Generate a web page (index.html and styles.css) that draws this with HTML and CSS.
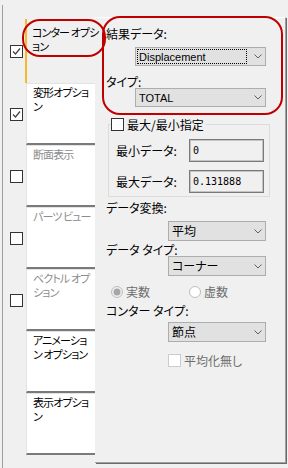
FILE: index.html
```html
<!DOCTYPE html>
<html lang="ja">
<head>
<meta charset="utf-8">
<link rel="stylesheet" href="styles.css">
</head>
<body>
<div class="app">
  <div class="side">
    <div class="row first">
      <div class="cbcell"><span class="cb"><svg viewBox="0 0 11 11" width="11" height="11"><polyline points="2,5.5 4.5,8 9,2.5" fill="none" stroke="#404040" stroke-width="1.2"/></svg></span></div>
      <div class="tab sel">コンター オプシ<br>ョン</div>
    </div>
    <div class="row">
      <div class="cbcell"><span class="cb"><svg viewBox="0 0 11 11" width="11" height="11"><polyline points="2,5.5 4.5,8 9,2.5" fill="none" stroke="#404040" stroke-width="1.2"/></svg></span></div>
      <div class="tab">変形オプショ<br>ン</div>
    </div>
    <div class="row">
      <div class="cbcell"><span class="cb"></span></div>
      <div class="tab dis">断面表示</div>
    </div>
    <div class="row">
      <div class="cbcell"><span class="cb"></span></div>
      <div class="tab dis">パーツ ビュー</div>
    </div>
    <div class="row">
      <div class="cbcell"><span class="cb"></span></div>
      <div class="tab dis">ベクトル オプ<br>ション</div>
    </div>
    <div class="row">
      <div class="cbcell"></div>
      <div class="tab">アニメーショ<br>ン オプション</div>
    </div>
    <div class="row">
      <div class="cbcell"></div>
      <div class="tab">表示オプショ<br>ン</div>
    </div>
  </div>

  <div class="panel">
    <div class="lbl m1">結果データ:</div>
    <div class="dd wide m2"><span class="focus">Displacement</span><svg class="chev" viewBox="0 0 8 5" width="8" height="5"><polyline points="0.5,0.5 4,4 7.5,0.5" fill="none" stroke="#606060"/></svg></div>
    <div class="lbl m3">タイプ:</div>
    <div class="dd wide lat"><span>TOTAL</span><svg class="chev" viewBox="0 0 8 5" width="8" height="5"><polyline points="0.5,0.5 4,4 7.5,0.5" fill="none" stroke="#606060"/></svg></div>

    <fieldset class="grp">
      <legend><span class="cbw"></span><span>最大/最小指定</span></legend>
      <div class="gr"><span class="gl">最小データ:</span><span class="tb">0</span></div>
      <div class="gr"><span class="gl">最大データ:</span><span class="tb">0.131888</span></div>
    </fieldset>

    <div class="lbl m4">データ変換:</div>
    <div class="dd narrow m5"><span>平均</span><svg class="chev" viewBox="0 0 8 5" width="8" height="5"><polyline points="0.5,0.5 4,4 7.5,0.5" fill="none" stroke="#606060"/></svg></div>
    <div class="lbl m6">データ タイプ:</div>
    <div class="dd narrow"><span>コーナー</span><svg class="chev" viewBox="0 0 8 5" width="8" height="5"><polyline points="0.5,0.5 4,4 7.5,0.5" fill="none" stroke="#606060"/></svg></div>

    <div class="radios">
      <div class="ri first-r"><svg viewBox="0 0 12 12" width="12" height="12"><circle cx="6" cy="6" r="5.5" fill="#f0f0f0" stroke="#bcbcbc"/><circle cx="6" cy="6" r="3.5" fill="#a6a6a6"/></svg><span>実数</span></div>
      <div class="ri"><svg viewBox="0 0 12 12" width="12" height="12"><circle cx="6" cy="6" r="5.5" fill="#fff" stroke="#bcbcbc"/></svg><span>虚数</span></div>
    </div>

    <div class="lbl m7">コンター タイプ:</div>
    <div class="dd narrow m8"><span>節点</span><svg class="chev" viewBox="0 0 8 5" width="8" height="5"><polyline points="0.5,0.5 4,4 7.5,0.5" fill="none" stroke="#606060"/></svg></div>
    <div class="chk"><span class="cbd"></span><span>平均化無し</span></div>
  </div>

  <div class="ann ann1"></div>
  <div class="ann ann2"></div>
</div>
</body>
</html>
```
FILE: styles.css
```css
* { box-sizing: border-box; }
html, body { margin: 0; padding: 0; }
body {
  width: 288px;
  height: 468px;
  overflow: hidden;
  background: #f0f0f0;
  font-family: "Noto Sans CJK JP", "Noto Sans", sans-serif;
  font-size: 12px;
  color: #000;
  font-feature-settings: "palt";
}
.app {
  display: flex;
  height: 468px;
  position: relative;
}
.side {
  margin-left: 2px;
  margin-top: 5px;
  border-left: 1px solid #a0a0a0;
  padding-top: 14px;
  width: 93px;
  flex: none;
}
.row {
  display: flex;
  align-items: stretch;
  height: 62px;
}
.row.first { height: 64px; }
.cbcell {
  width: 23px;
  padding-left: 7px;
  display: flex;
  align-items: center;
  flex: none;
}
.cb {
  width: 13px;
  height: 13px;
  border: 1px solid #333;
  background: #fff;
  display: block;
}
.cb svg { display: block; }
.tab {
  width: 69px;
  flex: none;
  background: #fff;
  border-top: 1px solid #e3e3e3;
  border-left: 1px solid #e3e3e3;
  border-bottom: 2px solid #7a7a7a;
  padding: 1px 0 0 6px;
  font-size: 11px;
  line-height: 14px;
  letter-spacing: -0.9px;
  white-space: nowrap;
  overflow: hidden;
}
.tab.sel {
  background: #f0f0f0;
  border: none;
  border-left: 2px solid #f6b92b;
  margin-left: -1px;
  width: 70px;
  padding: 6px 0 0 5px;
  overflow: visible;
}
.tab.dis { color: #8c8c8c; }

.panel {
  margin-top: 17px;
  width: 191px;
  height: 446px;
  flex: none;
  border-top: 1px solid #fff;
  border-right: 1px solid #a0a0a0;
  border-bottom: 1px solid #a0a0a0;
  box-shadow: 1px 1px 0 #696969;
  padding: 0 0 0 11px;
}
.lbl { line-height: 12px; white-space: nowrap; }
.m1 { margin-top: 10px; }
.m2 { margin-top: 7px; }
.m3 { margin-top: 10px; }
.m4 { margin-top: 5px; }
.m5 { margin-top: 7px; }
.m6 { margin-top: 3px; }
.m7 { margin-top: 7px; }
.m8 { margin-top: 5px; }

.dd {
  display: flex;
  align-items: center;
  justify-content: space-between;
  background: #e1e1e1;
  border: 1px solid #adadad;
  padding: 0 3px 0 3px;
  line-height: 14px;
  white-space: nowrap;
}
.dd.wide { margin-left: 29px; width: 131px; height: 19px; }
.dd.narrow { margin-left: 62px; width: 98px; height: 20px; }
.dd .chev { display: block; flex: none; }
.dd.lat, .focus { font-family: "Liberation Sans", "Noto Sans", sans-serif; font-size: 11px; }
.focus {
  margin-left: -2px;
  width: 110px;
  height: 15px;
  padding-left: 2px;
  outline: 1px dotted #000;
  outline-offset: -1px;
  display: flex;
  align-items: center;
}

.grp {
  margin: 11px 0 0 2px;
  width: 162px;
  border: 1px solid #dcdcdc;
  padding: 0 0 3px 7px;
  min-inline-size: auto;
}
.grp legend {
  padding: 0 2px 0 0;
  margin-left: -5px;
  display: flex;
  align-items: center;
  gap: 3px;
  line-height: 13px;
}
.cbw {
  width: 13px;
  height: 13px;
  border: 1px solid #333;
  background: #fff;
  display: block;
}
.gr {
  display: flex;
  align-items: center;
  height: 23px;
  margin-top: 8px;
}
.gl { width: 73px; flex: none; }
.tb {
  width: 75px;
  height: 23px;
  border: 1px solid #7a7a7a;
  box-shadow: inset 0 0 0 1px #c4c4c4;
  padding-left: 3px;
  display: flex;
  align-items: center;
  font-family: "DejaVu Sans Mono", monospace;
  font-size: 10px;
}

.radios {
  display: flex;
  align-items: center;
  margin-top: 9px;
  margin-left: 5px;
  height: 13px;
  color: #6d6d6d;
}
.ri { display: flex; align-items: center; gap: 3px; }
.ri svg { display: block; flex: none; }
.ri.first-r { width: 78px; }

.chk {
  display: flex;
  align-items: center;
  gap: 3px;
  margin-top: 12px;
  margin-left: 62px;
  height: 13px;
  color: #6d6d6d;
}
.cbd {
  width: 13px;
  height: 13px;
  border: 1px solid #cccccc;
  background: #fff;
  display: block;
}

.ann {
  position: absolute;
  border: 2px solid #c00000;
  pointer-events: none;
}
.ann1 { left: 22px; top: 19px; width: 84px; height: 38px; border-radius: 18px; }
.ann2 { left: 102px; top: 16px; width: 181px; height: 99px; border-radius: 18px; }
```
